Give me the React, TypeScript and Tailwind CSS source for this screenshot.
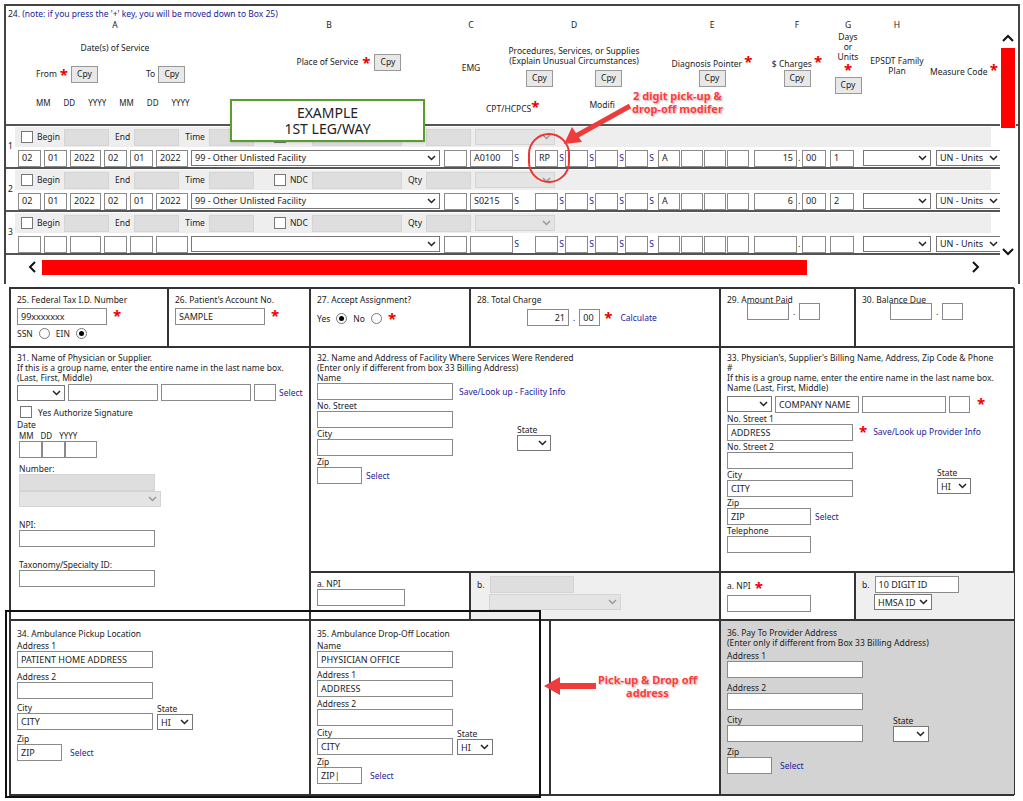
import React from "react";

const F = "font-['DejaVu_Sans',sans-serif]";

const Box = ({ w, v = "", gray = false, right = false, cls = "" }: { w: number; v?: string; gray?: boolean; right?: boolean; cls?: string }) => (
  <div
    className={`h-[17px] shrink-0 border ${gray ? "border-[#d4d4d4] bg-[#dedede]" : "border-[#8a8a8a] bg-white"} flex items-center px-[3px] text-[9px] text-[#222] whitespace-nowrap overflow-hidden font-['Liberation_Sans',sans-serif] ${right ? "justify-end" : ""} ${cls}`}
    style={{ width: w }}
  >
    {v}
  </div>
);

const Sel = ({ w, v = "", gray = false }: { w: number; v?: string; gray?: boolean }) => (
  <div
    className={`h-[16px] shrink-0 border ${gray ? "border-[#d4d4d4] bg-[#e4e4e4] text-[#999]" : "border-[#777] bg-white text-[#222]"} flex items-center justify-between px-[3px] text-[9px] whitespace-nowrap overflow-hidden font-['Liberation_Sans',sans-serif]`}
    style={{ width: w }}
  >
    <span>{v}</span>
    <svg className="shrink-0" width="9" height="6" viewBox="0 0 9 6"><path d="M1 1l3.5 3.5L8 1" fill="none" stroke="currentColor" strokeWidth="1.5" /></svg>
  </div>
);

const Cpy = () => (
  <div className="h-[17px] w-[27px] border border-[#999] bg-[#e8e8e8] text-[8.5px] flex items-center justify-center text-[#222]">Cpy</div>
);

const Star = ({ cls = "" }: { cls?: string }) => <span className={`text-[#e00] text-[15px] leading-none font-bold ${cls}`}>*</span>;

const Chk = () => <div className="w-[12px] h-[12px] border border-[#777] bg-white shrink-0" />;
const Radio = ({ on = false }: { on?: boolean }) => (
  <div className="w-[11px] h-[11px] rounded-full border border-[#777] bg-white flex items-center justify-center shrink-0">
    {on && <div className="w-[5px] h-[5px] rounded-full bg-black" />}
  </div>
);

const Link = ({ children }: { children: React.ReactNode }) => <span className="text-[#22229a] text-[8.5px] whitespace-nowrap">{children}</span>;
const S = () => <span className="text-[#22229a] text-[8.5px] w-[5px] text-center">S</span>;

type Row = { n: string; d: string[]; pos: string; cpt: string; mod: string; diag: string; ch: string; ce: string; u: string };
const rows: Row[] = [
  { n: "1", d: ["02", "01", "2022", "02", "01", "2022"], pos: "99 - Other Unlisted Facility", cpt: "A0100", mod: "RP", diag: "A", ch: "15", ce: "00", u: "1" },
  { n: "2", d: ["02", "01", "2022", "02", "01", "2022"], pos: "99 - Other Unlisted Facility", cpt: "S0215", mod: "", diag: "A", ch: "6", ce: "00", u: "2" },
  { n: "3", d: ["", "", "", "", "", ""], pos: "", cpt: "", mod: "", diag: "", ch: "", ce: "", u: "" },
];
const dw = [23, 23, 31, 23, 23, 32];

const LineRow = ({ r }: { r: Row }) => (
  <div className="flex border-b-2 border-[#555] h-[43px]">
    <div className="w-[20px] flex items-center justify-center text-[8.5px]">{r.n}</div>
    <div className="flex flex-col gap-[2px] pt-[1px]">
      <div className="flex items-center gap-[4px] bg-[#eeeeee] h-[20px] pl-[6px] text-[8.5px] w-[976px]">
        <Chk /><span>Begin</span><Box w={45} gray /><span className="ml-[2px]">End</span><Box w={45} gray />
        <span className="ml-[2px]">Time</span><Box w={45} gray /><span className="w-[12px]" /><Chk /><span>NDC</span><Box w={90} gray />
        <span className="ml-[2px]">Qty</span><Box w={45} gray /><Sel w={80} gray />
      </div>
      <div className="flex items-center h-[18px] pl-[3px]">
        <div className="flex items-center gap-[3px]">
          {r.d.map((v, i) => <Box key={i} w={dw[i]} v={v} />)}
          <Sel w={249} v={r.pos} />
          <Box w={23} cls="ml-[1px]" />
          <Box w={43} v={r.cpt} />
        </div>
        <div className="flex items-center gap-[1px] ml-[1px]">
          <S /><span className="w-[14px]" />
          <Box w={23} v={r.mod} /><S /><Box w={23} /><S /><Box w={23} /><S /><Box w={23} /><S />
          <span className="w-[2px]" />
          <Box w={22} v={r.diag} /><Box w={22} /><Box w={22} /><Box w={22} />
          <span className="w-[3px]" />
          <Box w={43} v={r.ch} right /><span className="text-[9px] w-[3px]">.</span><Box w={24} v={r.ce} /><span className="w-[2px]" /><Box w={24} v={r.u} />
          <span className="w-[7px]" />
          <Sel w={68} /><span className="w-[3px]" /><Sel w={66} v="UN - Units" />
        </div>
      </div>
    </div>
  </div>
);

const Cell = ({ cls = "", children }: { cls?: string; children?: React.ReactNode }) => (
  <div className={`border border-[#333] px-[6px] py-[5px] text-[8.5px] leading-[11px] text-[#222] overflow-hidden ${cls}`}>{children}</div>
);

const Field = ({ label, w, v = "", after }: { label: string; w: number; v?: string; after?: React.ReactNode }) => (
  <div className="flex flex-col">
    <span>{label}</span>
    <div className="flex items-center gap-[8px]"><Box w={w} v={v} />{after}</div>
  </div>
);

export default function App() {
  return (
    <div className={`relative w-[1023px] h-[801px] bg-white overflow-hidden ${F} text-[8.5px] text-[#222]`}>
      {/* Box 24 */}
      <div className="mt-[4px] ml-[4px] w-[1016px] h-[280px] border-t-2 border-l-2 border-r-2 border-[#444] relative">
        <div className="h-[120px] relative border-b-2 border-[#555]">
          <div className="text-[#22229a] pt-[2px] pl-[2px]"><span className="text-[#222]">24.</span> (note: if you press the '+' key, you will be moved down to Box 25)</div>
          <div className="flex">
            <div className="w-[196px] pl-[22px] flex flex-col items-center">
              <span className="-mt-[2px]">A</span>
              <span className="mt-[10px]">Date(s) of Service</span>
              <div className="flex items-center mt-[12px] w-full gap-[3px] pl-[8px]">
                <span>From</span><Star /><Cpy /><span className="ml-[45px]">To</span><Cpy />
              </div>
              <div className="flex w-full mt-[14px] gap-[13px] pl-[8px] text-[8px]"><span>MM</span><span>DD</span><span>YYYY</span><span>MM</span><span>DD</span><span>YYYY</span></div>
            </div>
            <div className="w-[254px] flex flex-col items-center">
              <span className="-mt-[2px]">B</span>
              <div className="flex items-center gap-[4px] mt-[22px] ml-[40px]"><span>Place of Service</span><Star /><Cpy /></div>
            </div>
            <div className="w-[30px] flex flex-col items-center">
              <span className="-mt-[2px]">C</span>
              <span className="mt-[30px]">EMG</span>
            </div>
            <div className="w-[176px] flex flex-col items-center relative">
              <span className="-mt-[2px]">D</span>
              <span className="mt-[14px] text-center leading-[10px]">Procedures, Services, or Supplies<br />(Explain Unusual Circumstances)</span>
              <div className="flex gap-[42px] mt-[4px]"><Cpy /><Cpy /></div>
              <div className="flex w-full mt-[12px] gap-[50px]"><span>CPT/HCPCS<Star /></span><span>Modifi</span></div>
            </div>
            <div className="w-[100px] flex flex-col items-center">
              <span className="-mt-[2px]">E</span>
              <span className="mt-[22px] whitespace-nowrap">Diagnosis Pointer <Star /></span>
              <Cpy />
            </div>
            <div className="w-[70px] flex flex-col items-center">
              <span className="-mt-[2px]">F</span>
              <span className="mt-[22px] whitespace-nowrap">$ Charges <Star /></span>
              <Cpy />
            </div>
            <div className="w-[32px] flex flex-col items-center">
              <span className="-mt-[2px]">G</span>
              <span className="text-center leading-[10px]">Days<br />or<br />Units</span>
              <Star />
              <Cpy />
            </div>
            <div className="w-[66px] flex flex-col items-center">
              <span className="-mt-[2px]">H</span>
              <span className="mt-[24px] text-center leading-[10px]">EPSDT Family<br />Plan</span>
            </div>
            <div className="w-[70px] flex flex-col">
              <span className="mt-[41px] whitespace-nowrap">Measure Code <Star /></span>
            </div>
          </div>
        </div>
        <div className="w-[996px] overflow-hidden">
          {rows.map((r) => <LineRow key={r.n} r={r} />)}
        </div>
        {/* vertical scroll */}
        <div className="absolute right-[2px] top-[28px] w-[16px] h-[222px] flex flex-col items-center bg-white">
          <svg width="12" height="8" viewBox="0 0 12 8"><path d="M1 7l5-5 5 5" fill="none" stroke="#111" strokeWidth="2" /></svg>
          <div className="w-[14px] h-[80px] bg-[#ff0000] mt-[6px]" />
          <div className="flex-1" />
          <svg width="12" height="8" viewBox="0 0 12 8"><path d="M1 1l5 5 5-5" fill="none" stroke="#111" strokeWidth="2" /></svg>
        </div>
        {/* horizontal scroll */}
        <div className="flex items-center h-[22px] pl-[22px] mt-[1px]">
          <svg width="8" height="12" viewBox="0 0 8 12"><path d="M7 1L2 6l5 5" fill="none" stroke="#111" strokeWidth="2" /></svg>
          <div className="ml-[6px] w-[765px] h-[15px] bg-[#ff0000]" />
          <div className="flex-1" />
          <svg className="mr-[38px]" width="8" height="12" viewBox="0 0 8 12"><path d="M1 1l5 5-5 5" fill="none" stroke="#111" strokeWidth="2" /></svg>
        </div>
      </div>

      {/* Boxes 25-36 */}
      <div className="ml-[9px] mt-[3px] w-[1005px] grid grid-cols-[158px_142px_160px_80px_170px_135px_160px] grid-rows-[59px_225px_48px_175px] border border-[#333]">
        <Cell>
          <div>25. Federal Tax I.D. Number</div>
          <div className="flex items-start gap-[6px] mt-[3px]"><Box w={90} v="99xxxxxxx" /><Star /></div>
          <div className="flex items-center gap-[6px] mt-[3px]">SSN <Radio /> EIN <Radio on /></div>
        </Cell>
        <Cell>
          <div>26. Patient's Account No.</div>
          <div className="flex items-start gap-[6px] mt-[3px]"><Box w={90} v="SAMPLE" /><Star /></div>
        </Cell>
        <Cell>
          <div>27. Accept Assignment?</div>
          <div className="flex items-center gap-[6px] mt-[6px]">Yes <Radio on /> No <Radio /><Star /></div>
        </Cell>
        <Cell cls="col-span-2">
          <div>28. Total Charge</div>
          <div className="flex items-center gap-[4px] mt-[4px] ml-[50px]"><Box w={42} v="21" right />.<Box w={21} v="00" /><Star /><span className="ml-[4px]"><Link>Calculate</Link></span></div>
        </Cell>
        <Cell>
          <div>29. Amount Paid</div>
          <div className="flex items-center gap-[4px] ml-[20px] -mt-[2px]"><Box w={42} />.<Box w={21} /></div>
        </Cell>
        <Cell>
          <div>30. Balance Due</div>
          <div className="flex items-center gap-[4px] ml-[28px] -mt-[2px]"><Box w={42} />.<Box w={21} /></div>
        </Cell>

        <Cell cls="col-span-2 row-span-2">
          <div className="leading-[10px]">31. Name of Physician or Supplier.<br />If this is a group name, enter the entire name in the last name box.<br />(Last, First, Middle)</div>
          <div className="flex items-center gap-[3px] mt-[1px]"><Sel w={48} /><Box w={90} /><Box w={90} /><Box w={22} /><Link>Select</Link></div>
          <div className="flex items-center gap-[6px] mt-[5px] ml-[3px]"><Chk />Yes Authorize Signature</div>
          <div className="mt-[1px]">Date</div>
          <div className="flex gap-[7px] ml-[2px] text-[8px]"><span>MM</span><span>DD</span><span>YYYY</span></div>
          <div className="flex ml-[2px]"><Box w={23} /><Box w={23} /><Box w={32} /></div>
          <div className="ml-[2px] mt-[5px]">Number:</div>
          <div className="ml-[2px]"><Box w={136} gray /><Sel w={142} gray /></div>
          <div className="ml-[2px] mt-[12px]">NPI:</div>
          <div className="ml-[2px]"><Box w={136} /></div>
          <div className="ml-[2px] mt-[12px]">Taxonomy/Specialty ID:</div>
          <div className="ml-[2px]"><Box w={136} /></div>
        </Cell>
        <Cell cls="col-span-3">
          <div className="leading-[10px]">32. Name and Address of Facility Where Services Were Rendered<br />(Enter only if different from box 33 Billing Address)<br />Name</div>
          <div className="flex items-center gap-[6px]"><Box w={136} /><Link>Save/Look up - Facility Info</Link></div>
          <div>No. Street</div>
          <Box w={136} />
          <div className="flex">
            <div className="flex flex-col"><span>City</span><Box w={136} /></div>
            <div className="flex flex-col ml-[64px] -mt-[4px]"><span>State</span><Sel w={34} /></div>
          </div>
          <div>Zip</div>
          <div className="flex items-center gap-[4px]"><Box w={45} /><Link>Select</Link></div>
        </Cell>
        <Cell cls="col-span-2">
          <div className="leading-[10px]">33. Physician's, Supplier's Billing Name, Address, Zip Code &amp; Phone<br />#<br />If this is a group name, enter the entire name in the last name box.<br />Name (Last, First, Middle)</div>
          <div className="flex items-start gap-[3px] mt-[3px]"><Sel w={45} /><Box w={84} v="COMPANY NAME" /><Box w={84} /><Box w={21} /><Star cls="ml-[4px]" /></div>
          <div>No. Street 1</div>
          <div className="flex items-start gap-[6px]"><Box w={126} v="ADDRESS" /><Star /><span className="mt-[2px]"><Link>Save/Look up Provider Info</Link></span></div>
          <div>No. Street 2</div>
          <Box w={126} />
          <div className="flex">
            <div className="flex flex-col"><span>City</span><Box w={126} v="CITY" /></div>
            <div className="flex flex-col ml-[84px] -mt-[2px]"><span>State</span><Sel w={34} v="HI" /></div>
          </div>
          <div>Zip</div>
          <div className="flex items-center gap-[4px]"><Box w={84} v="ZIP" /><Link>Select</Link></div>
          <div>Telephone</div>
          <Box w={84} />
        </Cell>

        <Cell>
          <div>a. NPI</div>
          <Box w={88} />
        </Cell>
        <Cell cls="col-span-2 bg-[#efefef] flex flex-col">
          <div className="flex items-center gap-[5px] -mt-[2px]">b. <Box w={84} gray /></div>
          <div className="ml-[12px] mt-[1px]"><Sel w={132} gray /></div>
        </Cell>
        <Cell>
          <div className="flex items-start gap-[4px] mt-[2px]">a. NPI <Star /></div>
          <Box w={84} />
        </Cell>
        <Cell cls="bg-[#efefef]">
          <div className="flex items-center gap-[5px] -mt-[2px]">b. <Box w={84} v="10 DIGIT ID" /></div>
          <div className="ml-[12px] mt-[1px]"><Sel w={58} v="HMSA ID" /></div>
        </Cell>

        <Cell cls="col-span-2 font-['Liberation_Sans_Narrow','Liberation_Sans',sans-serif]">
          <div className="mt-[2px] mb-[1px]">34. Ambulance Pickup Location</div>
          <Field label="Address 1" w={136} v="PATIENT HOME ADDRESS" />
          <div className="mt-[3px]"><Field label="Address 2" w={136} /></div>
          <div className="flex items-end gap-[4px] mt-[3px]">
            <Field label="City" w={136} v="CITY" />
            <div className="flex flex-col"><span>State</span><Sel w={36} v="HI" /></div>
          </div>
          <div className="mt-[3px]"><Field label="Zip" w={45} v="ZIP" after={<Link>Select</Link>} /></div>
        </Cell>
        <Cell cls="col-span-2 font-['Liberation_Sans_Narrow','Liberation_Sans',sans-serif]">
          <div className="mt-[2px] mb-[1px]">35. Ambulance Drop-Off Location</div>
          <Field label="Name" w={136} v="PHYSICIAN OFFICE" />
          <div className="mt-[1px]"><Field label="Address 1" w={136} v="ADDRESS" /></div>
          <div className="mt-[1px]"><Field label="Address 2" w={136} /></div>
          <div className="flex items-end gap-[4px] mt-[1px]">
            <Field label="City" w={136} v="CITY" />
            <div className="flex flex-col"><span>State</span><Sel w={36} v="HI" /></div>
          </div>
          <div className="mt-[1px]"><Field label="Zip" w={45} v="ZIP|" after={<Link>Select</Link>} /></div>
        </Cell>
        <Cell />
        <Cell cls="col-span-2 bg-[#d3d3d3] font-['Liberation_Sans_Narrow','Liberation_Sans',sans-serif]">
          <div className="leading-[10px] mt-[2px]">36. Pay To Provider Address<br />(Enter only if different from Box 33 Billing Address)</div>
          <div className="mt-[2px]"><Field label="Address 1" w={136} /></div>
          <div className="mt-[4px]"><Field label="Address 2" w={136} /></div>
          <div className="flex items-end gap-[30px] mt-[4px]">
            <Field label="City" w={136} />
            <div className="flex flex-col"><span>State</span><Sel w={36} /></div>
          </div>
          <div className="mt-[4px]"><Field label="Zip" w={45} after={<Link>Select</Link>} /></div>
        </Cell>
      </div>

      {/* annotations */}
      <div className="absolute left-[230px] top-[99px] w-[195px] h-[43px] border-2 border-[#5a9e2f] bg-white flex flex-col items-center justify-center font-['Liberation_Sans',sans-serif] text-[14px] leading-[16px] text-[#222] shadow">
        <span>EXAMPLE</span><span>1ST LEG/WAY</span>
      </div>
      <div className="absolute left-[528px] top-[133px] w-[42px] h-[50px] rounded-full border-2 border-[#e33]" />
      <div className="absolute left-[632px] top-[89px] text-center font-['Liberation_Sans',sans-serif] font-bold text-[11px] leading-[13px] text-[#ff3a3a] [text-shadow:0_0_2px_#fff,1px_1px_2px_#999]">
        2 digit pick-up &amp;<br />drop-off modifer
      </div>
      <svg className="absolute left-[560px] top-[100px]" width="80" height="50" viewBox="0 0 80 50">
        <path d="M70 6L16 36" stroke="#ee3b3b" strokeWidth="5" />
        <path d="M4 44L12 27 22 42Z" fill="#ee3b3b" />
      </svg>
      <div className="absolute left-[598px] top-[673px] text-center font-['Liberation_Sans',sans-serif] font-bold text-[11px] leading-[13px] text-[#ff3a3a] [text-shadow:0_0_2px_#fff,1px_1px_2px_#999]">
        Pick-up &amp; Drop off<br />address
      </div>
      <svg className="absolute left-[542px] top-[676px]" width="56" height="20" viewBox="0 0 56 20">
        <path d="M54 10H16" stroke="#ee3b3b" strokeWidth="6" />
        <path d="M2 10L18 1V19Z" fill="#ee3b3b" />
      </svg>
      <div className="absolute left-[5px] top-[610px] w-[536px] h-[188px] border-2 border-[#111]" />
    </div>
  );
}
